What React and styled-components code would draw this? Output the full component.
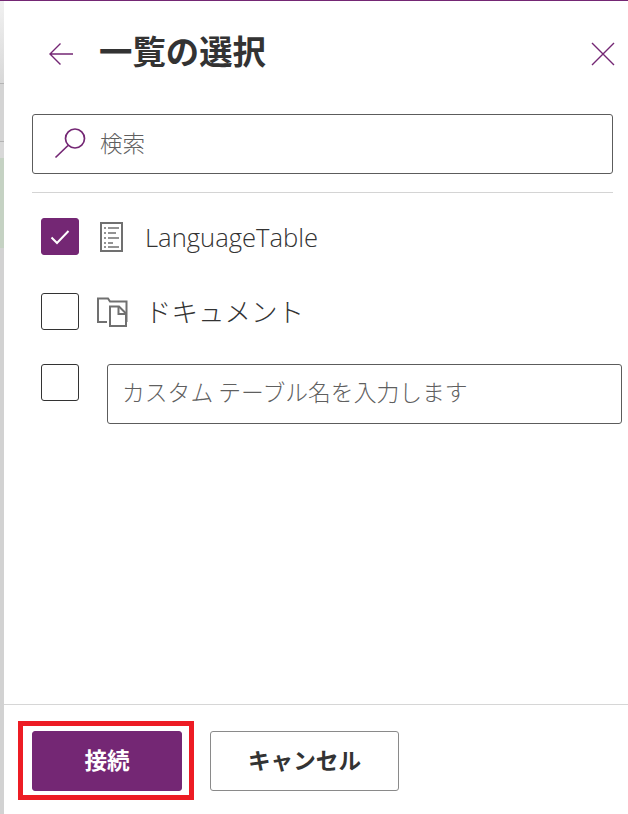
import React from "react";
import styled, { createGlobalStyle } from "styled-components";

const GlobalStyle = createGlobalStyle`
  html, body {
    margin: 0;
    padding: 0;
    background: #fff;
  }
  * {
    box-sizing: border-box;
  }
`;

const fontStack = `"Open Sans", "Noto Sans CJK JP", sans-serif`;
const jpFont = `"Noto Sans CJK JP", sans-serif`;
const purple = "#742774";

const Page = styled.div`
  width: 628px;
  height: 814px;
  display: flex;
  flex-direction: column;
  overflow: hidden;
  font-family: ${fontStack};
`;
const TopLine = styled.div`
  height: 1px;
  flex: none;
  background: ${purple};
`;
const Body = styled.div`
  flex: 1;
  display: flex;
  min-height: 0;
`;
const Backdrop = styled.div`
  width: 4px;
  flex: none;
  display: flex;
  flex-direction: column;
`;
const BackdropPart = styled.div`
  height: ${(p) => p.$h}px;
  flex: ${(p) => (p.$h ? "none" : 1)};
  background: ${(p) => p.$bg};
  border-bottom: ${(p) => (p.$line ? "1px solid #b4b4b4" : "none")};
`;
const Panel = styled.div`
  flex: 1;
  min-width: 0;
  display: flex;
  flex-direction: column;
  background: #fff;
`;
const Header = styled.div`
  height: 106px;
  flex: none;
  display: flex;
  align-items: center;
  padding: 0 13px 0 44px;
`;
const IconButton = styled.button`
  border: 0;
  padding: 0;
  background: none;
  display: flex;
  align-items: center;
  justify-content: center;
`;
const Title = styled.h1`
  margin: 0 0 8px 25px;
  flex: 1;
  font-size: 33.4px;
  font-weight: 700;
  line-height: 44px;
  color: #333;
  font-family: ${jpFont};
`;
const Content = styled.div`
  padding: 7px 6px 0 28px;
`;
const SearchBox = styled.div`
  width: 581px;
  height: 60px;
  display: flex;
  align-items: center;
  gap: 14px;
  padding-left: 21px;
  border: 1.5px solid #5c5c5c;
  border-radius: 3px;
`;
const Placeholder = styled.span`
  font-size: ${(p) => p.$size || 22.5}px;
  line-height: 30px;
  padding-bottom: 4px;
  color: #5f5f5f;
  font-family: ${jpFont};
  font-weight: 300;
`;
const Divider = styled.div`
  width: 581px;
  height: 1px;
  margin-top: 18px;
  background: #d4d4d4;
`;
const Row = styled.div`
  display: flex;
  align-items: ${(p) => (p.$top ? "flex-start" : "center")};
  margin-top: ${(p) => p.$mt}px;
  padding-left: 9px;
`;
const CheckBox = styled.div`
  width: 38px;
  height: 37px;
  flex: none;
  display: flex;
  align-items: center;
  justify-content: center;
  border-radius: 3px;
  background: ${(p) => (p.$checked ? purple : "#fff")};
  border: 1px solid ${(p) => (p.$checked ? purple : "#333")};
`;
const IconSlot = styled.div`
  width: 66px;
  flex: none;
  display: flex;
  padding-left: ${(p) => p.$pl}px;
`;
const RowLabel = styled.span`
  font-size: ${(p) => p.$size}px;
  line-height: 32px;
  padding-top: ${(p) => p.$pt || 0}px;
  color: #333;
  font-weight: 300;
`;
const CustomInput = styled.div`
  width: 515px;
  height: 60px;
  margin-left: 28px;
  display: flex;
  align-items: center;
  padding-left: 14px;
  border: 1.5px solid #5c5c5c;
  border-radius: 3px;
`;
const Footer = styled.div`
  margin-top: auto;
  height: 110px;
  flex: none;
  display: flex;
  align-items: flex-start;
  gap: 16px;
  padding: 16px 0 0 14px;
  border-top: 1px solid #d6d6d6;
`;
const Highlight = styled.div`
  padding: 5px 7px 4px 9px;
  border: 5px solid #ed1c24;
`;
const Button = styled.button`
  width: ${(p) => p.$w}px;
  height: 60px;
  margin-top: ${(p) => p.$mt || 0}px;
  border-radius: 3px;
  font-family: ${jpFont};
  font-size: 22.6px;
  font-weight: 700;
  padding: 0 0 3px;
  color: ${(p) => (p.$primary ? "#fff" : "#333")};
  background: ${(p) => (p.$primary ? purple : "#fff")};
  border: 1px solid ${(p) => (p.$primary ? purple : "#8a8a8a")};
`;

const BackIcon = () => (
  <svg width="26" height="24" viewBox="0 0 26 24" fill="none" stroke={purple} strokeWidth="1.4">
    <path d="M25 12H2M12.5 1.5 2 12l10.5 10.5" />
  </svg>
);

const CloseIcon = () => (
  <svg width="24" height="24" viewBox="0 0 24 24" fill="none" stroke={purple} strokeWidth="1.4">
    <path d="M1 1l22 22M23 1 1 23" />
  </svg>
);

const CheckMark = () => (
  <svg width="20" height="16" viewBox="0 0 20 16" fill="none" stroke="#fff" strokeWidth="2">
    <path d="M1.5 8.5l5.5 5.5L18.5 2" />
  </svg>
);

const SearchIcon = () => (
  <svg width="32" height="32" viewBox="0 0 32 32" fill="none" stroke={purple} strokeWidth="1.7">
    <circle cx="21" cy="10.5" r="9.5" />
    <path d="M14 17.5 L1.5 29.5" />
  </svg>
);

const TableIcon = () => (
  <svg width="24" height="30" viewBox="0 0 24 30" fill="none" stroke="#707070" strokeWidth="2">
    <rect x="1" y="1" width="21" height="28" />
    <path d="M4 6h2M8 6h11M4 11h2M8 11h8M4 16h2M8 16h11M4 21h2M8 21h5" strokeWidth="1.6" />
    <path d="M4 25h2M8 25h11" strokeWidth="1.6" />
  </svg>
);

const LibraryIcon = () => (
  <svg width="32" height="30" viewBox="0 0 32 30" fill="none" stroke="#707070" strokeWidth="2">
    <path d="M11 25H2V1.5h10l2 3h16.5V25" />
    <path d="M14 29V9.5h9l7 7V29Z" fill="#fff" />
    <path d="M22.5 9.5v7.5H30" />
  </svg>
);

const App = () => {
  return (
    <Page>
      <GlobalStyle />
      <TopLine />
      <Body>
        <Backdrop>
          <BackdropPart $h={83} $bg="linear-gradient(#f1f1f1, #d8d8d8)" $line />
          <BackdropPart $h={58} $bg="#d4d4d4" $line />
          <BackdropPart $h={16} $bg="#d8d8d8" />
          <BackdropPart $h={90} $bg="#c5d2c3" />
          <BackdropPart $bg="#d2d2d2" />
        </Backdrop>
        <Panel>
          <Header>
            <IconButton aria-label="戻る">
              <BackIcon />
            </IconButton>
            <Title>一覧の選択</Title>
            <IconButton aria-label="閉じる">
              <CloseIcon />
            </IconButton>
          </Header>
          <Content>
            <SearchBox>
              <SearchIcon />
              <Placeholder>検索</Placeholder>
            </SearchBox>
            <Divider />
            <Row $mt={25}>
              <CheckBox $checked>
                <CheckMark />
              </CheckBox>
              <IconSlot $pl={21}>
                <TableIcon />
              </IconSlot>
              <RowLabel $size={25.6} $pt={2}>LanguageTable</RowLabel>
            </Row>
            <Row $mt={38}>
              <CheckBox />
              <IconSlot $pl={17}>
                <LibraryIcon />
              </IconSlot>
              <RowLabel $size={26.5}>ドキュメント</RowLabel>
            </Row>
            <Row $mt={34} $top>
              <CheckBox />
              <CustomInput>
                <Placeholder $size={22.8}>カスタム テーブル名を入力します</Placeholder>
              </CustomInput>
            </Row>
          </Content>
          <Footer>
            <Highlight>
              <Button $primary $w={150}>接続</Button>
            </Highlight>
            <Button $w={189} $mt={10}>キャンセル</Button>
          </Footer>
        </Panel>
      </Body>
    </Page>
  );
};

export default App;
